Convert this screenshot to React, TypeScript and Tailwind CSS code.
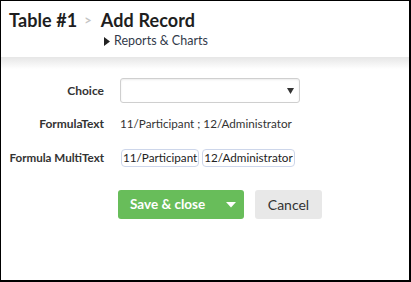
import React from "react";

export default function App() {
  return (
    <div
      className="w-[411px] h-[282px] bg-white border-t border-l border-r-2 border-b-2 border-black overflow-hidden flex flex-col"
      style={{ fontFamily: "Lato, 'Open Sans', sans-serif" }}
    >
      <div className="h-[56px] pl-[8px] pt-[8px]">
        <div className="flex items-center h-[22px]">
          <span className="text-[18px] font-bold text-[#1e1e1e] leading-none tracking-[0.1px]">Table #1</span>
          <span className="ml-[7px] mr-[9px] text-[#c4c4c4] text-[13px] font-bold leading-none">&gt;</span>
          <span className="text-[18px] font-bold text-[#1e1e1e] leading-none tracking-[0.1px]">Add Record</span>
        </div>
        <div className="flex items-center ml-[95px] mt-[2px] h-[16px]">
          <svg width="6" height="9" viewBox="0 0 6 9" className="mr-[4px]">
            <polygon points="0,0 6,4.5 0,9" fill="#222" />
          </svg>
          <span className="text-[12.5px] text-[#333a4a] leading-none">Reports &amp; Charts</span>
        </div>
      </div>
      <div className="h-[12px] bg-gradient-to-b from-[#e6e6e6] to-white" />
      <div className="flex flex-col pt-[9px]">
        <div className="flex items-center h-[25px]">
          <div className="w-[103px] text-right text-[12px] font-bold text-[#333]">Choice</div>
          <div className="ml-[16px] w-[180px] h-[25px] border border-[#cfcfcf] rounded-[3px] shadow-[inset_0_1px_2px_rgba(0,0,0,0.08)] flex items-center justify-end pr-[5px]">
            <svg width="7" height="6" viewBox="0 0 7 6">
              <polygon points="0,0 7,0 3.5,6" fill="#333" />
            </svg>
          </div>
        </div>
        <div className="flex items-center h-[18px] mt-[12px]">
          <div className="w-[103px] text-right text-[12px] font-bold text-[#333]">FormulaText</div>
          <div className="ml-[16px] text-[11.7px] text-[#333]">11/Participant ; 12/Administrator</div>
        </div>
        <div className="flex items-center h-[18px] mt-[16px]">
          <div className="w-[103px] text-right text-[11.6px] font-bold text-[#333] whitespace-nowrap">Formula MultiText</div>
          <div className="ml-[17px] flex gap-[3px]">
            <span className="h-[18px] px-[1px] flex items-center border border-[#cdd6ea] rounded-[4px] text-[11.7px] text-[#222]">11/Participant</span>
            <span className="h-[18px] px-[1px] flex items-center border border-[#cdd6ea] rounded-[4px] text-[11.7px] text-[#222]">12/Administrator</span>
          </div>
        </div>
        <div className="flex items-center mt-[23px] ml-[117px]">
          <div className="w-[126px] h-[29px] bg-[#68bd5a] rounded-[3px] flex items-center pl-[12px] pr-[8px] justify-between">
            <span className="text-white text-[13.5px] font-bold">Save &amp; close</span>
            <svg width="10" height="6" viewBox="0 0 10 6">
              <polygon points="0,0 10,0 5,5.5" fill="#fff" />
            </svg>
          </div>
          <div className="ml-[11px] w-[67px] h-[29px] bg-[#e8e8e8] rounded-[3px] flex items-center justify-center text-[14px] text-[#333]">
            Cancel
          </div>
        </div>
      </div>
    </div>
  );
}
